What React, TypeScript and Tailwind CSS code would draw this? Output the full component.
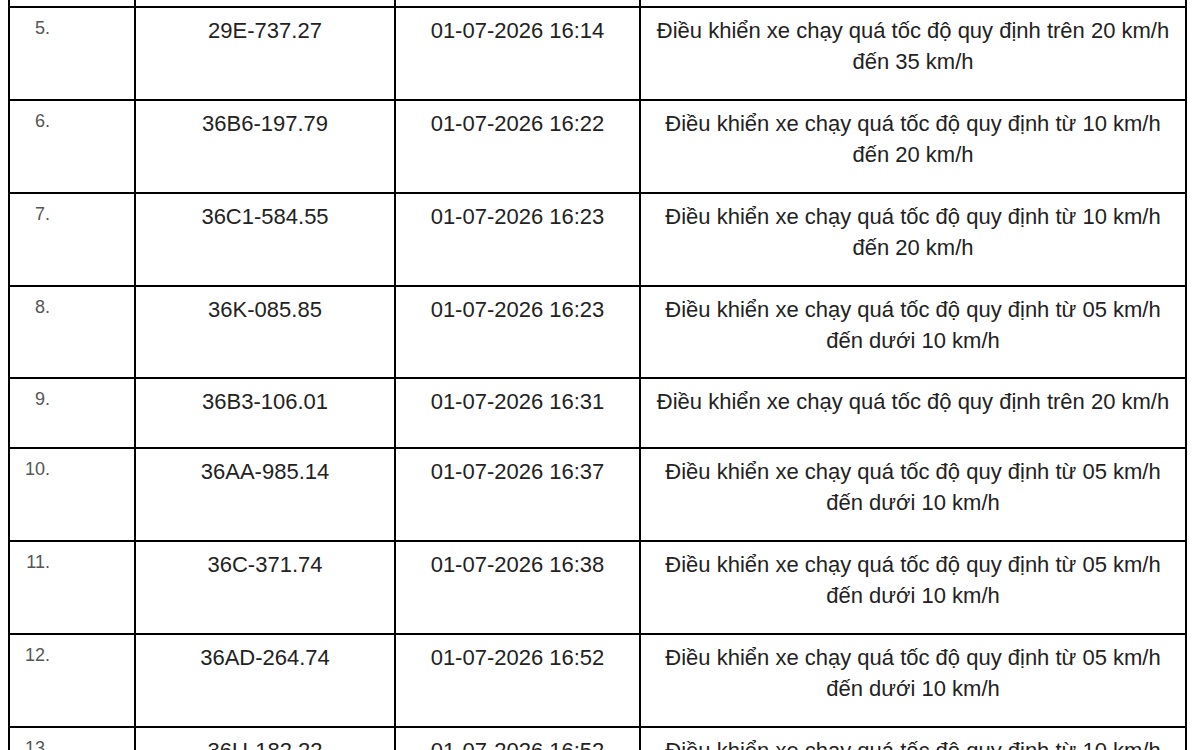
const rows = [
  { no: "5.", plate: "29E-737.27", time: "01-07-2026 16:14", lines: ["Điều khiển xe chạy quá tốc độ quy định trên 20 km/h", "đến 35 km/h"], h: 93 },
  { no: "6.", plate: "36B6-197.79", time: "01-07-2026 16:22", lines: ["Điều khiển xe chạy quá tốc độ quy định từ 10 km/h", "đến 20 km/h"], h: 93 },
  { no: "7.", plate: "36C1-584.55", time: "01-07-2026 16:23", lines: ["Điều khiển xe chạy quá tốc độ quy định từ 10 km/h", "đến 20 km/h"], h: 93 },
  { no: "8.", plate: "36K-085.85", time: "01-07-2026 16:23", lines: ["Điều khiển xe chạy quá tốc độ quy định từ 05 km/h", "đến dưới 10 km/h"], h: 92 },
  { no: "9.", plate: "36B3-106.01", time: "01-07-2026 16:31", lines: ["Điều khiển xe chạy quá tốc độ quy định trên 20 km/h"], h: 70 },
  { no: "10.", plate: "36AA-985.14", time: "01-07-2026 16:37", lines: ["Điều khiển xe chạy quá tốc độ quy định từ 05 km/h", "đến dưới 10 km/h"], h: 93 },
  { no: "11.", plate: "36C-371.74", time: "01-07-2026 16:38", lines: ["Điều khiển xe chạy quá tốc độ quy định từ 05 km/h", "đến dưới 10 km/h"], h: 93 },
  { no: "12.", plate: "36AD-264.74", time: "01-07-2026 16:52", lines: ["Điều khiển xe chạy quá tốc độ quy định từ 05 km/h", "đến dưới 10 km/h"], h: 93 },
  { no: "13.", plate: "36U-182.22", time: "01-07-2026 16:52", lines: ["Điều khiển xe chạy quá tốc độ quy định từ 10 km/h", "đến 20 km/h"], h: 93 },
];

const cell = "border-r-2 border-black shrink-0 h-full";
const text = "pt-[7px] text-center text-[22px] leading-[31px] text-[#222]";

export default function App() {
  return (
    <div
      className="h-[750px] w-[1200px] overflow-hidden bg-white pl-2"
      style={{ fontFamily: '"Liberation Sans", Arial, sans-serif' }}
    >
      <div className="w-[1179px] border-l-2 border-black">
        {/* tail of row 4 */}
        <div className="flex h-[6px]">
          <div className={`${cell} w-[126px]`} />
          <div className={`${cell} w-[260px]`} />
          <div className={`${cell} w-[245px]`} />
          <div className={`${cell} w-[546px]`} />
        </div>

        {rows.map((r) => (
          <div key={r.no} className="flex border-t-2 border-black" style={{ height: r.h }}>
            <div className={`${cell} w-[126px] pt-[9px]`}>
              <div className="w-[40px] text-right text-[18px] leading-[22px] text-[#555]">{r.no}</div>
            </div>
            <div className={`${cell} w-[260px] ${text}`}>{r.plate}</div>
            <div className={`${cell} w-[245px] ${text}`}>{r.time}</div>
            <div className={`${cell} w-[546px] ${text} whitespace-nowrap`}>
              {r.lines.map((l) => (
                <div key={l}>{l}</div>
              ))}
            </div>
          </div>
        ))}
      </div>
    </div>
  );
}
